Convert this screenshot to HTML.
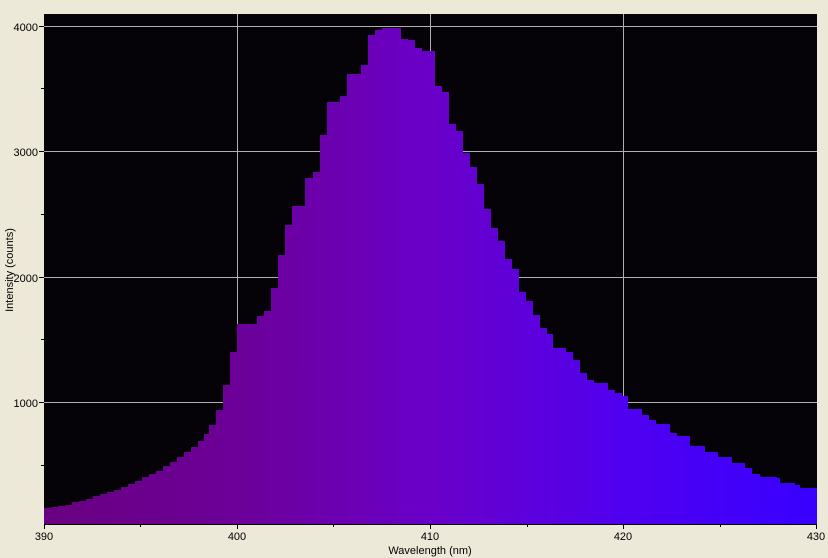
<!DOCTYPE html>
<html><head><meta charset="utf-8"><style>
html,body{margin:0;padding:0;background:#ece9d8;}
svg{display:block;font-family:"Liberation Sans",sans-serif;}
</style></head><body>
<svg width="828" height="558" viewBox="0 0 828 558" xmlns="http://www.w3.org/2000/svg">
<defs>
<linearGradient id="g" x1="44" x2="817" y1="0" y2="0" gradientUnits="userSpaceOnUse">
<stop offset="0" stop-color="#6a0080"/>
<stop offset="0.25" stop-color="#6c0098"/>
<stop offset="0.5" stop-color="#6a00c8"/>
<stop offset="0.75" stop-color="#5000f0"/>
<stop offset="1" stop-color="#3800ff"/>
</linearGradient>
</defs>
<rect x="44" y="14" width="773" height="510" fill="#050307"/>
<g stroke="#b0b0b0" stroke-width="1">
<line x1="237.5" y1="14" x2="237.5" y2="524"/>
<line x1="430.5" y1="14" x2="430.5" y2="524"/>
<line x1="623.5" y1="14" x2="623.5" y2="524"/>
<line x1="44" y1="26.5" x2="817" y2="26.5"/>
<line x1="44" y1="151.5" x2="817" y2="151.5"/>
<line x1="44" y1="277.5" x2="817" y2="277.5"/>
<line x1="44" y1="402.5" x2="817" y2="402.5"/>
</g>
<path fill="url(#g)" d="M44 524 V508 H51 V507 H58 V506 H65 V505 H72 V502 H79 V501 H86 V499 H93 V496 H100 V494 H107 V492 H114 V490 H121 V487 H128 V484 H135 V481 H142 V477 H149 V474 H156 V471 H163 V466 H170 V462 H177 V457 H184 V452 H191 V447 H198 V441 H204 V434 H209 V425 H216 V410 H223 V385 H230 V352 H237 V324 H257 V316 H264 V311 H271 V288 H278 V255 H285 V225 H292 V206 H305 V178 H313 V172 H320 V135 H327 V102 H340 V96 H347 V74 H361 V65 H368 V35 H375 V30 H382 V28 H401 V39 H408 V40 H415 V48 H422 V51 H435 V86 H442 V92 H449 V124 H456 V131 H463 V153 H470 V167 H477 V184 H484 V209 H491 V228 H498 V241 H505 V259 H512 V269 H519 V292 H526 V301 H533 V315 H540 V328 H547 V334 H553 V348 H566 V352 H573 V360 H580 V373 H587 V380 H594 V383 H608 V390 H615 V393 H622 V396 H628 V409 H642 V415 H649 V420 H656 V424 H670 V433 H677 V436 H690 V446 H705 V452 H718 V457 H732 V463 H745 V468 H752 V474 H760 V477 H777 V478 H780 V483 H795 V485 H800 V488 H817 V524 Z"/>
<g stroke="#000" stroke-width="1">
<line x1="44" y1="524.5" x2="817" y2="524.5"/>
<line x1="44.5" y1="524" x2="44.5" y2="529"/>
<line x1="140.5" y1="524" x2="140.5" y2="527"/>
<line x1="237.5" y1="524" x2="237.5" y2="529"/>
<line x1="333.5" y1="524" x2="333.5" y2="527"/>
<line x1="430.5" y1="524" x2="430.5" y2="529"/>
<line x1="527.5" y1="524" x2="527.5" y2="527"/>
<line x1="623.5" y1="524" x2="623.5" y2="529"/>
<line x1="720.5" y1="524" x2="720.5" y2="527"/>
<line x1="816.5" y1="524" x2="816.5" y2="529"/>
<line x1="39" y1="26.5" x2="44" y2="26.5"/>
<line x1="41" y1="88.5" x2="44" y2="88.5"/>
<line x1="39" y1="151.5" x2="44" y2="151.5"/>
<line x1="41" y1="214.5" x2="44" y2="214.5"/>
<line x1="39" y1="277.5" x2="44" y2="277.5"/>
<line x1="41" y1="339.5" x2="44" y2="339.5"/>
<line x1="39" y1="402.5" x2="44" y2="402.5"/>
<line x1="41" y1="465.5" x2="44" y2="465.5"/>
</g>
<g font-size="11" fill="#000">
<g text-anchor="end">
<text x="38" y="31">4000</text>
<text x="38" y="156">3000</text>
<text x="38" y="282">2000</text>
<text x="38" y="407">1000</text>
</g>
<g text-anchor="middle">
<text x="44" y="540">390</text>
<text x="237" y="540">400</text>
<text x="430" y="540">410</text>
<text x="623" y="540">420</text>
<text x="816" y="540">430</text>
<text x="430" y="554">Wavelength (nm)</text>
<text transform="translate(13 270) rotate(-90)">Intensity (counts)</text>
</g>
</g>
</svg>
</body></html>
